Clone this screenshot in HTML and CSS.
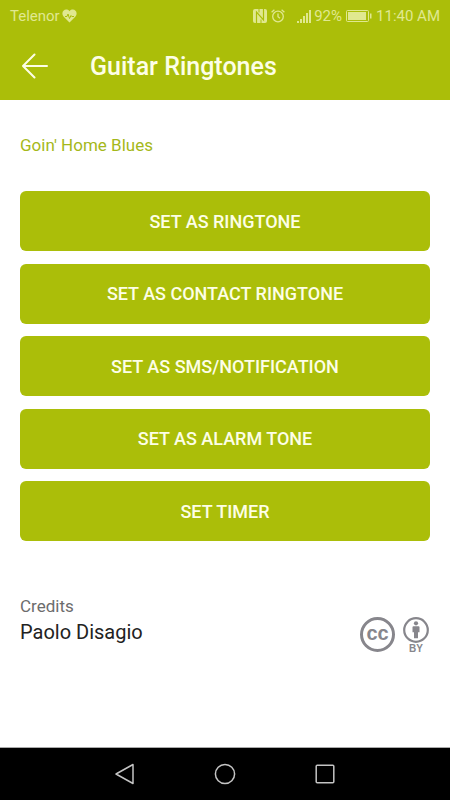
FILE: index.html
```html
<!DOCTYPE html>
<html lang="en">
<head>
    <meta charset="UTF-8">
    <meta name="viewport" content="width=device-width, initial-scale=1.0">
    <title>Guitar Ringtones</title>
    <link rel="stylesheet" href="styles.css">
</head>
<body>
    <header>
        <div class="status-bar">
            <div class="carrier">
                <span>Telenor</span>
                <svg width="15" height="14" viewBox="0 0 15 14">
                    <path d="M7.500 13.500 1.500 7.500C-2 3 3.500-2 7.500 2.200 11.500-2 17 3 13.500 7.500Z" fill="currentColor"/>
                    <path d="M3 7.500h2l1-2.500 1.500 4.500 1.500-3 .8 1H12" fill="none" stroke="#abbe09"/>
                </svg>
            </div>
            <div class="indicators">
                <svg width="14" height="14" viewBox="0 0 14 14">
                    <rect width="14" height="14" rx="2" fill="currentColor"/>
                    <path d="M3.500 14V3l7 8V0" fill="none" stroke="#abbe09" stroke-width="1.200"/>
                    <path d="M6 0v3.500M8 14v-3.500" stroke="#abbe09"/>
                </svg>
                <svg class="alarm" width="14" height="14" viewBox="0 0 14 14" fill="none" stroke="currentColor" stroke-width="1.300">
                    <circle cx="7" cy="7.500" r="5.300"/>
                    <path d="M7 4.500v3.200l2 1.500M.6 3.300 3.400.8M13.400 3.300 10.600.8"/>
                </svg>
                <svg width="15" height="14" viewBox="0 0 15 14" fill="currentColor">
                    <path d="M0 12h2v2H0zM3 10h2v4H3zM6 7h2v7H6zM9 4h2v10H9zM12 1h2v13h-2z"/>
                </svg>
                <span>92%</span>
                <svg width="26" height="12" viewBox="0 0 26 12">
                    <rect x=".5" y=".5" width="22" height="11" rx="1" fill="none" stroke="currentColor"/>
                    <path d="M2 2h18v8H2zM24 3.500h1.500v5H24z" fill="currentColor"/>
                </svg>
                <span class="clock">11:40 AM</span>
            </div>
        </div>
        <div class="title-bar">
            <button class="back-button" type="button" aria-label="Back">
                <svg width="26" height="26" viewBox="0 0 26 26" fill="none" stroke="currentColor" stroke-width="2" stroke-linecap="round" stroke-linejoin="round">
                    <path d="M12.500 1.500 1 13l11.500 11.500M1 13h24"/>
                </svg>
            </button>
            <h1>Guitar Ringtones</h1>
        </div>
    </header>

    <main>
        <h2>Goin' Home Blues</h2>
        <div class="actions">
            <button type="button">SET AS RINGTONE</button>
            <button type="button">SET AS CONTACT RINGTONE</button>
            <button type="button">SET AS SMS/NOTIFICATION</button>
            <button type="button">SET AS ALARM TONE</button>
            <button type="button">SET TIMER</button>
        </div>
        <section class="credits">
            <div>
                <p class="credits-label">Credits</p>
                <p class="credits-name">Paolo Disagio</p>
            </div>
            <div class="license">
                <div class="cc">cc</div>
                <div class="by">
                    <svg width="26" height="26" viewBox="0 0 26 26">
                        <circle cx="13" cy="13" r="11.800" fill="none" stroke="currentColor" stroke-width="2.200"/>
                        <circle cx="13" cy="6.300" r="2.100" fill="currentColor"/>
                        <path d="M10.500 9.300h5q1 0 1 1v5h-1.500v6h-4v-6H9.500v-5q0-1 1-1z" fill="currentColor"/>
                    </svg>
                    <span>BY</span>
                </div>
            </div>
        </section>
    </main>

    <nav class="nav-bar">
        <button type="button" aria-label="Back">
            <svg width="22" height="22" viewBox="0 0 22 22" fill="none" stroke="currentColor" stroke-width="1.500" stroke-linejoin="round">
                <path d="M19 1.500v19L2 11z"/>
            </svg>
        </button>
        <button type="button" aria-label="Home">
            <svg width="22" height="22" viewBox="0 0 22 22" fill="none" stroke="currentColor" stroke-width="1.500">
                <circle cx="11" cy="11" r="9.600"/>
            </svg>
        </button>
        <button type="button" aria-label="Recent apps">
            <svg width="22" height="22" viewBox="0 0 22 22" fill="none" stroke="currentColor" stroke-width="1.500">
                <rect x="2.200" y="2.200" width="17.600" height="17.600" rx="1"/>
            </svg>
        </button>
    </nav>
</body>
</html>
```

FILE: styles.css
```css
* {
    box-sizing: border-box;
}

body {
    display: flex;
    flex-direction: column;
    min-height: 100vh;
    margin: 0;
    font-family: Roboto, Arial, sans-serif;
    background-color: #fff;
}

h1,
h2,
p {
    margin: 0;
}

button {
    font-family: inherit;
    border: none;
    cursor: pointer;
}

svg {
    display: block;
}

/* Header */
header {
    background-color: #abbe09;
    color: #fdfee6;
}

.status-bar {
    display: flex;
    justify-content: space-between;
    align-items: center;
    height: 32px;
    padding: 0 10px;
    font-size: 15px;
    color: #e0e890;
}

.carrier,
.indicators {
    display: flex;
    align-items: center;
}

.carrier {
    gap: 2px;
}

.indicators {
    gap: 4px;
}

.alarm {
    margin-right: 8px;
}

.indicators svg + span {
    margin-left: -2px;
}

.indicators .clock {
    margin-left: 0;
}

.title-bar {
    display: flex;
    align-items: center;
    gap: 40px;
    height: 68px;
    padding: 0 20px;
}

.back-button {
    padding: 0 2px;
    color: inherit;
    background: none;
}

h1 {
    font-size: 25px;
    font-weight: 500;
}

/* Content */
main {
    flex: 1;
    padding: 35px 20px 20px;
}

h2 {
    font-size: 17px;
    font-weight: 400;
    line-height: 20px;
    color: #a5b81a;
}

.actions {
    display: flex;
    flex-direction: column;
    justify-content: space-between;
    min-height: 350px;
    margin-top: 36px;
}

.actions button {
    min-height: 60px;
    border-radius: 6px;
    font-size: 18px;
    font-weight: 500;
    color: #fdfee6;
    background-color: #abbe09;
}

/* Credits */
.credits {
    display: flex;
    justify-content: space-between;
    margin-top: 52px;
}

.credits-label {
    font-size: 17px;
    line-height: 26px;
    color: #6c6c6c;
}

.credits-name {
    font-size: 20px;
    line-height: 26px;
    color: #222;
}

.license {
    display: flex;
    align-items: flex-start;
    gap: 8px;
    padding: 24px 1px 0 0;
    color: #87868c;
}

.cc {
    display: flex;
    justify-content: center;
    width: 35px;
    height: 35px;
    border: 3px solid currentColor;
    border-radius: 50%;
    font-family: "Liberation Sans", Arial, sans-serif;
    font-size: 20px;
    font-weight: bold;
    line-height: 26px;
}

.by {
    font-family: "Liberation Sans", Arial, sans-serif;
    font-size: 10px;
    font-weight: bold;
    line-height: 12px;
    text-align: center;
}

/* Bottom navigation */
.nav-bar {
    display: flex;
    justify-content: center;
    gap: 60px;
    height: 53px;
    border-top: 1px solid #aaa;
    background-color: #000;
}

.nav-bar button {
    width: 40px;
    padding: 0 9px;
    color: #c4c4c4;
    background: none;
}
```
